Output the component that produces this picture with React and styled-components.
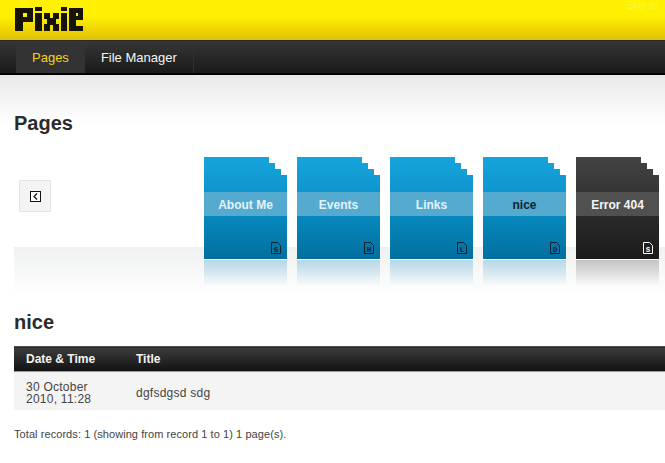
import styled, { createGlobalStyle } from "styled-components";

const pages = [
  { name: "About Me", letter: "S" },
  { name: "Events", letter: "H" },
  { name: "Links", letter: "L" },
  { name: "nice", letter: "D", active: true },
  { name: "Error 404", letter: "S", dark: true },
];

function Logo() {
  // blocky wordmark, drawn on a 1px grid
  const blocks = [
    [15, 8, 8, 23], [21, 8, 12, 5], [21, 17, 12, 5], [27, 8, 6, 14],
    [35, 7, 7, 4], [35, 13, 7, 18],
    [44, 13, 6, 6], [53, 13, 6, 6], [47, 18, 9, 7], [44, 24, 6, 7], [53, 24, 6, 7],
    [61, 7, 6, 4], [61, 13, 6, 18],
    [69, 8, 14, 5], [69, 8, 7, 23], [78, 8, 5, 12], [69, 16, 14, 4], [69, 26, 14, 5],
  ];
  return (
    <LogoSvg width="70" height="26" viewBox="14 6 70 26" aria-label="Pixie">
      {blocks.map(([x, y, w, h], i) => (
        <rect key={i} x={x} y={y} width={w} height={h} fill="#15130a" />
      ))}
    </LogoSvg>
  );
}

function FileIcon({ letter, color }) {
  return (
    <svg width="10" height="12" viewBox="0 0 10 12">
      <path
        d="M.5.5h6l3 3v8h-9z"
        fill="none"
        stroke={color}
        strokeWidth="1"
      />
      <text
        x="5"
        y="9.500"
        fontSize="7.500"
        fontWeight="700"
        fontFamily="Liberation Mono, monospace"
        textAnchor="middle"
        fill={color}
      >
        {letter}
      </text>
    </svg>
  );
}

export default function App() {
  return (
    <Page>
      <Global />
      <Header>
        <Logo />
        <TopLink>Skip to</TopLink>
      </Header>
      <Nav>
        <Tab $current>Pages</Tab>
        <Tab>File Manager</Tab>
      </Nav>
      <Main>
        <Heading>Pages</Heading>
        <Carousel>
          <PrevButton aria-label="Previous">
            <svg width="11" height="11" viewBox="0 0 11 11">
              <rect x=".5" y=".5" width="10" height="10" fill="#fff" stroke="#111" />
              <path d="M7 2.500 4 5.500l3 3" fill="none" stroke="#111" strokeWidth="1.200" />
            </svg>
          </PrevButton>
          <Cards>
            {pages.map((p) => (
              <CardSlot key={p.name}>
                <Card $dark={p.dark}>
                  <Label $dark={p.dark} $active={p.active}>
                    {p.name}
                  </Label>
                  <CardIcon>
                    <FileIcon letter={p.letter} color={p.dark ? "#fff" : "#12222c"} />
                  </CardIcon>
                </Card>
                <Reflection $dark={p.dark} />
              </CardSlot>
            ))}
          </Cards>
        </Carousel>
        <SubHeading>nice</SubHeading>
        <Table>
          <thead>
            <tr>
              <Th $width={98}>Date &amp; Time</Th>
              <Th>Title</Th>
            </tr>
          </thead>
          <tbody>
            <tr>
              <Td>
                30 October
                <br />
                2010, 11:28
              </Td>
              <Td>dgfsdgsd sdg</Td>
            </tr>
          </tbody>
        </Table>
        <Total>Total records: 1 (showing from record 1 to 1) 1 page(s).</Total>
      </Main>
    </Page>
  );
}

/* ── styled ── */
const Global = createGlobalStyle`
  html, body {
    margin: 0;
    background: #fff;
    overflow: hidden;
  }
  body {
    font-family: "Liberation Sans", Arial, sans-serif;
  }
`;

const Page = styled.div`
  width: 665px;
  height: 463px;
  overflow: hidden;
`;

const Header = styled.header`
  height: 40px;
  display: flex;
  justify-content: space-between;
  background: linear-gradient(#fff200 0%, #fff000 40%, #dfc106 100%);
`;

const LogoSvg = styled.svg`
  display: block;
  margin: 6px 0 0 14px;
`;

const TopLink = styled.span`
  font-size: 10px;
  line-height: 12px;
  color: #fbf73a;
  width: 38px;
  white-space: nowrap;
  overflow: hidden;
`;

const Nav = styled.nav`
  height: 32px;
  display: flex;
  padding-left: 16px;
  background: linear-gradient(#363636, #1a1a1a);
  border-top: 1px solid #2a2a2a;
  border-bottom: 2px solid #000;
`;

const Tab = styled.a`
  height: 30px;
  margin-top: 2px;
  padding: 0 16px;
  font-size: 13px;
  line-height: 30px;
  color: ${(p) => (p.$current ? "#f3d40e" : "#f4f4f4")};
  background: ${(p) => (p.$current ? "#333" : "transparent")};
  border-right: ${(p) => (p.$current ? "none" : "1px solid #303030")};
`;

const Main = styled.main`
  padding-left: 14px;
  background: linear-gradient(#e9e9e9, #fff 50px) no-repeat;
`;

const Heading = styled.h1`
  margin: 0;
  padding-top: 36px;
  font-size: 20px;
  line-height: 24px;
  font-weight: 700;
  color: #2b2b2b;
`;

const Carousel = styled.section`
  display: flex;
  height: 140px;
  margin-top: 22px;
  background: linear-gradient(#f0f1f1, #fff) left bottom / 100% 50px no-repeat;
`;

const PrevButton = styled.button`
  width: 32px;
  height: 32px;
  flex: none;
  margin: 23px 0 0 5px;
  padding: 0;
  display: flex;
  align-items: center;
  justify-content: center;
  background: #f4f4f4;
  border: 1px solid #e2e2e2;
`;

const Cards = styled.div`
  display: flex;
  gap: 10px;
  margin-left: 153px;
`;

const CardSlot = styled.div`
  width: 83px;
  flex: none;
`;

const Card = styled.div`
  height: 102px;
  display: flex;
  flex-direction: column;
  position: relative;
  border-bottom: 1px solid #fff;
  background: ${(p) =>
    p.$dark
      ? "linear-gradient(#444 0, #353535 35px, #2a2a2a 59px, #1b1b1b 102px)"
      : "linear-gradient(#16a4dc 0, #0f95cd 35px, #0788bf 59px, #026f9f 102px)"};
  clip-path: polygon(
    0 0,
    65px 0,
    65px 6px,
    71px 6px,
    71px 12px,
    77px 12px,
    77px 18px,
    83px 18px,
    83px 103px,
    0 103px
  );
`;

const Label = styled.div`
  height: 23px;
  margin-top: 35px;
  padding-top: 1px;
  text-align: center;
  font-size: 12px;
  font-weight: 700;
  line-height: 24px;
  color: ${(p) => (p.$active ? "#12222c" : p.$dark ? "#f5f5f5" : "#e4f3fa")};
  background: ${(p) => (p.$dark ? "#505050" : "#55aad0")};
`;

const CardIcon = styled.div`
  position: absolute;
  right: 6px;
  bottom: 5px;
  line-height: 0;
`;

const Reflection = styled.div`
  height: 26px;
  background: ${(p) =>
    p.$dark
      ? "linear-gradient(#c4c4c4, rgba(255,255,255,0))"
      : "linear-gradient(#b6d8e6, rgba(255,255,255,0))"};
`;

const SubHeading = styled.h2`
  margin: 13px 0 0;
  font-size: 20px;
  line-height: 24px;
  font-weight: 700;
  color: #2b2b2b;
`;

const Table = styled.table`
  width: 651px;
  margin-top: 12px;
  border-collapse: collapse;
  table-layout: fixed;
`;

const Th = styled.th`
  width: ${(p) => (p.$width ? `${p.$width}px` : "auto")};
  height: 24px;
  padding: 0 0 0 12px;
  text-align: left;
  font-size: 12px;
  font-weight: 700;
  color: #f2f2f2;
  background: linear-gradient(#3d3d3d, #111);
  border-top: 1px solid #555;
  border-bottom: 1px solid #999;
`;

const Td = styled.td`
  height: 35px;
  padding: 3px 0 0 12px;
  font-size: 12px;
  line-height: 12px;
  letter-spacing: 0.25px;
  color: #444;
  background: #f4f4f4;
`;

const Total = styled.p`
  margin: 18px 0 0;
  font-size: 11px;
  line-height: 12px;
  letter-spacing: 0.07px;
  color: #444;
`;
